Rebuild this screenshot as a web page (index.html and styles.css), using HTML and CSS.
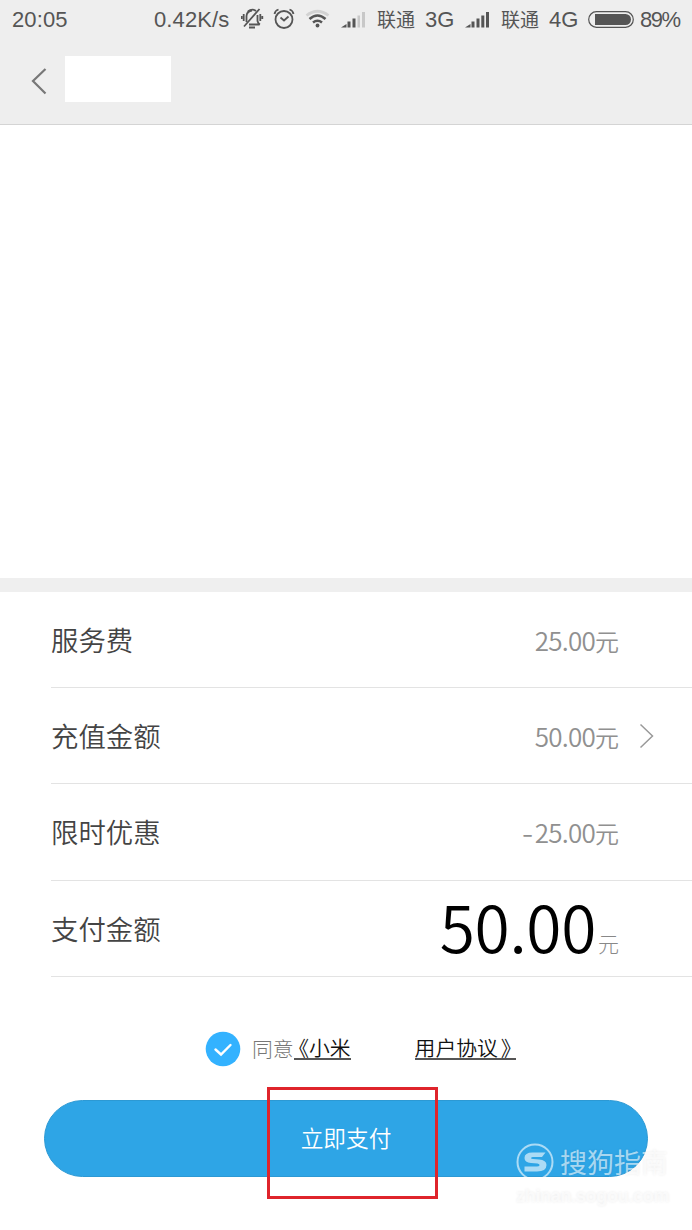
FILE: index.html
```html
<!DOCTYPE html>
<html lang="zh-CN">
<head>
<meta charset="utf-8">
<title>支付</title>
<link rel="stylesheet" href="styles.css">
</head>
<body>
<header class="header">
  <div class="status">
    <span>20:05</span>
    <span>0.42K/s</span>
    <svg class="icon" viewBox="0 0 32 40" width="32" height="40" fill="none" stroke="#555" stroke-width="1.8">
      <path d="M8 24.500H18.500M5.500 22V16Q6 11 11 10.500M16.500 15V21Q17 23.500 19 24.500"/>
      <path d="M8 27.500H14" stroke-width="2"/>
      <path d="M2.700 14V21M0.700 16V19M19.300 14V21M21.300 16V19M3 26.500L18.500 9M7 11.500Q11 8 15 11" />
    </svg>
    <svg class="icon" viewBox="0 0 32 40" width="32" height="40" fill="none" stroke="#555" stroke-width="1.8">
      <circle cx="11" cy="19.500" r="8.500"/>
      <path d="M7.500 17.500L11 20.500L15.500 16.500"/>
      <path d="M1.500 14Q2 10.500 5.500 9.500M20.500 14Q20 10.500 16.500 9.500"/>
    </svg>
    <svg class="icon" viewBox="0 0 36 40" width="36" height="40" fill="none" stroke="#555" stroke-width="2.600">
      <path d="M1.500 15.500Q12.500 7 23.500 15.500" stroke="#d2d2d2" stroke-width="2.800"/>
      <path d="M4.500 19Q12.500 12 20.500 19M8 22.500Q12.500 19 17 22.500"/>
      <circle cx="12.500" cy="25.500" r="1.900" fill="#555" stroke="none"/>
    </svg>
    <svg class="icon" viewBox="0 0 36 40" width="36" height="40">
      <path fill="#555" d="M0 27.500L5.500 24V27.500ZM6.500 21.500H9.500V27.500H6.500ZM11.500 18.500H14.500V27.500H11.500Z"/>
      <path fill="#c8c8c8" d="M16.500 15.500H19V27.500H16.500ZM21 12H24V27.500H21Z"/>
    </svg>
    <span class="carrier">联通</span>
    <span>3G</span>
    <svg class="icon" viewBox="0 0 36 40" width="36" height="40">
      <path fill="#555" d="M0 27.500L5.500 24V27.500ZM6.500 21.500H9.500V27.500H6.500ZM11.500 18.500H14.500V27.500H11.500ZM16.300 15.500H19.300V27.500H16.300ZM21 12H24V27.500H21Z"/>
    </svg>
    <span class="carrier">联通</span>
    <span>4G</span>
    <svg class="icon" viewBox="0 0 52 40" width="52" height="40">
      <rect x="0.700" y="11.700" width="44.600" height="15.600" rx="7.800" fill="none" stroke="#555" stroke-width="1.200"/>
      <path d="M7 14H37.500A5.500 5.500 0 0 1 37.500 25H7Z" fill="#555"/>
    </svg>
    <span class="battery-text">89%</span>
  </div>
  <div class="nav">
    <svg class="back" viewBox="0 0 18 30" width="18" height="30" fill="none" stroke="#777" stroke-width="2.200"><path d="M14.500 3L2 15L14.500 27.500"/></svg>
    <div class="title-mask"></div>
  </div>
</header>
<main>
  <div class="blank"></div>
  <div class="divider"></div>
  <section class="rows">
    <div class="row"><span class="label">服务费</span><span class="value">25.00<span class="unit">元</span></span></div>
    <div class="row"><span class="label">充值金额</span><span class="value">50.00<span class="unit">元</span></span>
      <svg class="chevron" viewBox="0 0 16 26" width="16" height="26" fill="none" stroke="#999" stroke-width="1.500"><path d="M1.500 1.500L13.500 13L1.500 24.500"/></svg>
    </div>
    <div class="row"><span class="label">限时优惠</span><span class="value"><span class="minus">-</span>25.00<span class="unit">元</span></span></div>
    <div class="row"><span class="label">支付金额</span><span class="total">50.00</span><span class="total-unit">元</span></div>
  </section>
  <div class="agree">
    <svg viewBox="0 0 36 36" width="36" height="36"><circle cx="18" cy="18" r="17.300" fill="#33b2ff"/><path d="M10.500 18.500L16 23.500L25.500 14" fill="none" stroke="#fff" stroke-width="2.400" stroke-linecap="round"/></svg>
    <span class="agree-text">同意</span><span class="link first"><span class="half">《</span>小米</span><span class="link second">用户协议<span class="half">》</span></span>
  </div>
  <div class="pay">
    <button class="pay-button">立即支付</button>
    <div class="highlight"></div>
    <div class="watermark">
      <div class="brand">
        <svg viewBox="0 0 38 38" width="38" height="38" fill="none"><circle cx="19" cy="19" r="17.500" stroke="currentColor" stroke-width="2"/><path d="M29.500 9.500H16.500Q8.500 9.500 8.500 15Q8.500 19.500 15 20L21.500 20.500Q24 21 23.500 22.500Q23 23.500 21 23.500H8.500V28.500H21Q30.500 28.500 30.500 22Q30.500 17 23 16.500L17 16Q15 15.800 15 15Q15.500 14 17 14H26Z" fill="currentColor"/></svg>
        <span>搜狗指南</span>
      </div>
      <div class="site">zhinan.sogou.com</div>
    </div>
  </div>
</main>
</body>
</html>
```
FILE: styles.css
```css
* { box-sizing: border-box; }
body {
  margin: 0;
  width: 692px;
  height: 1230px;
  overflow: hidden;
  background: #fff;
  font-family: "Liberation Sans", "Noto Sans CJK SC", sans-serif;
}
.header {
  height: 125px;
  background: #eee;
  border-bottom: 1px solid #d4d4d4;
}
.status {
  display: grid;
  grid-template-columns: 142px 87px 32px 32px 36px 36px 48px 40px 36px 48px 39px 52px 52px;
  height: 40px;
  padding-left: 12px;
  line-height: 40px;
  font-size: 22px;
  letter-spacing: 0.100px;
  color: #555;
  white-space: nowrap;
}
.icon { display: block; }
.carrier { font-size: 19px; line-height: 42px; }
.battery-text { letter-spacing: -1.500px; }
.nav {
  display: flex;
  align-items: center;
  height: 84px;
  padding: 0 0 6px 31px;
}
.back { margin-top: 4px; }
.title-mask {
  width: 106px;
  height: 46px;
  margin: 0 0 0 16px;
  background: #fff;
}
.blank { height: 453px; }
.divider { height: 14px; background: #efefef; }
.rows { padding-left: 51px; }
.row {
  display: flex;
  align-items: center;
  height: 96.200px;
  padding-right: 73px;
  border-bottom: 1px solid #e3e3e3;
  position: relative;
}
.label {
  flex: 1;
  padding-bottom: 1px;
  font-family: "Noto Sans CJK SC", sans-serif;
  font-weight: 350;
  font-size: 27.400px;
  line-height: 40px;
  color: #444;
}
.value {
  padding-top: 1px;
  font-family: "Noto Sans CJK SC", sans-serif;
  font-weight: 350;
  font-size: 26px;
  line-height: 40px;
  letter-spacing: -0.750px;
  color: #909090;
}
.unit { font-size: 24px; letter-spacing: 0; }
.minus { display: inline-block; transform: scaleX(1.250); margin-right: 3px; }
.chevron { position: absolute; left: 588px; top: 35px; }
.total {
  padding-bottom: 7px;
  margin-right: 2px;
  font-family: "Noto Sans CJK SC", sans-serif;
  font-weight: 350;
  font-size: 64px;
  line-height: 88px;
  letter-spacing: -0.300px;
  color: #000;
}
.total-unit {
  font-family: "Noto Sans CJK SC", sans-serif;
  font-size: 21px;
  line-height: 30px;
  margin-top: 29px;
  color: #888;
  font-weight: 300;
}
.agree {
  display: flex;
  align-items: center;
  height: 36px;
  margin: 54px 0 0 205px;
  font-family: "Noto Sans CJK SC", sans-serif;
  font-size: 20.800px;
  line-height: 30px;
  white-space: nowrap;
}
.agree-text { margin: -2px 0 0 11px; color: #777; font-weight: 300; }
.link {
  height: 22px;
  line-height: 18px;
  margin-top: 0;
  border-bottom: 2px solid #555;
  color: #111;
  font-weight: 350;
}
.half { font-feature-settings: "halt"; }
.first { width: 57px; padding-left: 5px; }
.second { width: 101px; margin-left: 64px; }
.second .half { margin-left: 3px; }
.pay {
  position: relative;
  margin-top: 33px;
  padding: 0 44px;
}
.pay-button {
  display: block;
  width: 604px;
  height: 77px;
  padding: 0;
  border: 1px solid #2c99d4;
  border-radius: 39px;
  background: #2ea5e6;
  color: #fff;
  font: 350 22.700px/74px "Noto Sans CJK SC", sans-serif;
}
.highlight {
  position: absolute;
  left: 267px;
  top: -13px;
  width: 171px;
  height: 112px;
  border: 3px solid #df242b;
}
.watermark {
  position: absolute;
  left: 516px;
  top: 43px;
  color: rgba(255, 255, 255, .6);
  text-shadow: 0 0 3px rgba(0, 0, 0, .08);
}
.brand {
  display: flex;
  align-items: center;
  height: 38px;
  gap: 6px;
  font-size: 27px;
  line-height: 42px;
  white-space: nowrap;
}
.brand span { padding-top: 4px; }
.site {
  margin-top: 3px;
  font-size: 18px;
  line-height: 24px;
  font-weight: bold;
  letter-spacing: -0.300px;
  white-space: nowrap;
}
```
